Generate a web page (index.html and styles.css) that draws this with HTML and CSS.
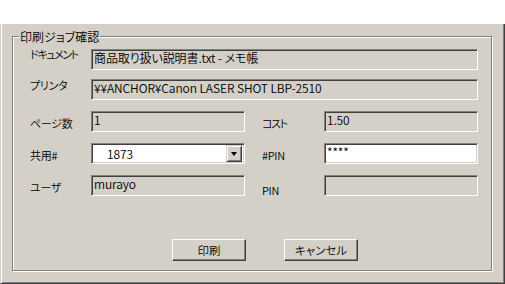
FILE: index.html
```html
<!DOCTYPE html>
<html lang="ja">
<head>
<meta charset="utf-8">
<title>印刷ジョブ確認</title>
<link rel="stylesheet" href="styles.css">
</head>
<body>
<div class="topbar"></div>
<div class="window">
  <div class="group">
    <div class="caption">印刷ジョブ確認</div>
    <div class="form">
      <div class="lbl l1 tight">ドキュメント</div>
      <div class="field wide">商品取り扱い説明書.txt - メモ帳</div>

      <div class="lbl l2">プリンタ</div>
      <div class="field wide">¥¥ANCHOR¥Canon LASER SHOT LBP-2510</div>

      <div class="lbl l3">ページ数</div>
      <div class="field left">1</div>
      <div class="lbl l3 rlbl tight">コスト</div>
      <div class="field right">1.50</div>

      <div class="lbl l3">共用#</div>
      <div class="combo left">
        <span class="combo-text">1873</span>
        <span class="combo-btn"><span class="arrow"></span></span>
      </div>
      <div class="lbl l3 rlbl">#PIN</div>
      <div class="field right white">****</div>

      <div class="lbl l3">ユーザ</div>
      <div class="field left">murayo</div>
      <div class="lbl l5 rlbl">PIN</div>
      <div class="field right"></div>
    </div>
    <div class="buttons">
      <button class="btn">印刷</button>
      <button class="btn">キャンセル</button>
    </div>
  </div>
</div>
</body>
</html>
```

FILE: styles.css
```css
* { box-sizing: border-box; }
html, body { margin: 0; padding: 0; background: #fff; }
body {
  width: 505px;
  height: 284px;
  overflow: hidden;
  font-family: "Noto Sans CJK JP", "Liberation Sans", sans-serif;
  font-size: 12px;
  font-weight: 350;
  font-feature-settings: "palt";
  color: #000;
}
.topbar { height: 24px; background: #fff; }
.window {
  width: 505px;
  height: 260px;
  background: #d4d0c8;
  border-left: 1px solid #d4d0c8;
  border-right: 1px solid #404040;
  border-bottom: 1px solid #404040;
  box-shadow: inset 1px 0 #fff, inset -1px -1px #808080;
  padding: 12px 0 0 11px;
}
.group {
  width: 480px;
  height: 235px;
  border: 1px solid #808080;
  box-shadow: inset 1px 1px #fff, 1px 1px #fff;
}
.caption {
  width: fit-content;
  margin: -7px 0 0 6px;
  padding: 0 1px 0 1px;
  line-height: 14px;
  height: 14px;
  font-size: 12px;
  background: #d4d0c8;
}
.form {
  margin-top: 5px;
  display: grid;
  grid-template-columns: 17px 61px 154px 17px 62px 154px;
  grid-template-rows: 30px 32px 32px 32px 21px;
  align-items: start;
}
.lbl {
  grid-column: 2;
  line-height: 14px;
  white-space: nowrap;
  font-size: 11px;
  letter-spacing: -0.3px;
}
.lbl.rlbl { grid-column: 5; }
.lbl.tight { letter-spacing: -1.4px; }
.l1 { margin-top: -2px; }
.l2 { margin-top: -1px; }
.l3 { margin-top: 5px; }
.l5 { margin-top: 8px; }
.field, .combo {
  height: 21px;
  border: 1px solid;
  border-color: #808080 #fff #fff #808080;
  box-shadow: inset 1px 1px #404040, inset -1px -1px #d4d0c8;
  background: #d4d0c8;
  padding: 1px 2px 0 2px;
  line-height: 13px;
  font-size: 12px;
  letter-spacing: -0.1px;
  white-space: nowrap;
  overflow: hidden;
}
.field.wide { grid-column: 3 / 7; }
.field.left, .combo.left { grid-column: 3; }
.field.right { grid-column: 6; }
.field.white { background: #fff; }
.combo {
  background: #fff;
  padding: 2px 2px 2px 2px;
  display: flex;
  align-items: center;
}
.combo-text { flex: 1; padding-left: 13px; line-height: 17px; }
.combo-btn {
  width: 16px;
  height: 17px;
  border: 1px solid;
  border-color: #d4d0c8 #404040 #404040 #d4d0c8;
  box-shadow: inset 1px 1px #fff, inset -1px -1px #808080;
  background: #d4d0c8;
  display: flex;
  align-items: center;
  justify-content: center;
}
.arrow {
  width: 0;
  height: 0;
  border-left: 3.5px solid transparent;
  border-right: 3.5px solid transparent;
  border-top: 4px solid #000;
  margin-top: 1px;
}
.buttons {
  margin-top: 43px;
  padding-left: 159px;
  display: flex;
  gap: 38px;
}
.btn {
  width: 74px;
  height: 22px;
  padding: 0;
  font: inherit;
  font-size: 11.5px;
  color: #000;
  background: #d4d0c8;
  border: 1px solid;
  border-color: #fff #404040 #404040 #fff;
  box-shadow: inset -1px -1px #808080;
  line-height: 18px;
}
```
